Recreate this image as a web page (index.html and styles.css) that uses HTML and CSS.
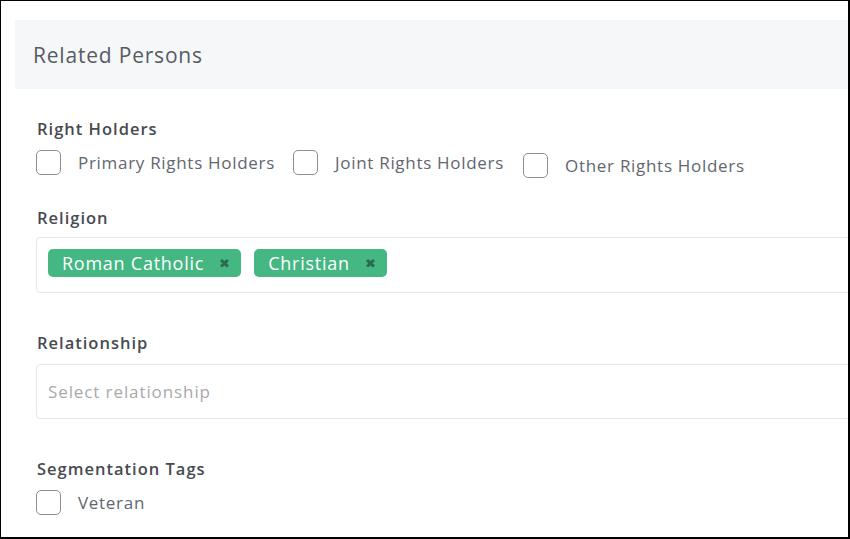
FILE: index.html
```html
<!DOCTYPE html>
<html lang="en">
<head>
<meta charset="utf-8">
<title>Related Persons</title>
<link rel="stylesheet" href="styles.css">
</head>
<body>
<div class="frame">
  <section class="card">
    <header class="card-header">Related Persons</header>
    <div class="card-body">
      <div class="field field-first">
        <div class="field-label">Right Holders</div>
        <div class="check-row">
          <label class="check"><span class="box"></span><span class="check-text">Primary Rights Holders</span></label>
          <label class="check"><span class="box"></span><span class="check-text">Joint Rights Holders</span></label>
          <label class="check check-low"><span class="box"></span><span class="check-text">Other Rights Holders</span></label>
        </div>
      </div>
      <div class="field field-religion">
        <div class="field-label">Religion</div>
        <div class="multi">
          <span class="tag">Roman Catholic<span class="tag-x">&#10006;</span></span>
          <span class="tag">Christian<span class="tag-x">&#10006;</span></span>
        </div>
      </div>
      <div class="field field-gap">
        <div class="field-label">Relationship</div>
        <div class="select">Select relationship</div>
      </div>
      <div class="field field-gap">
        <div class="field-label">Segmentation Tags</div>
        <div class="check-row">
          <label class="check"><span class="box"></span><span class="check-text">Veteran</span></label>
        </div>
      </div>
    </div>
  </section>
</div>
</body>
</html>
```

FILE: styles.css
```css
html, body {
  margin: 0;
  padding: 0;
  background: #fff;
}

.frame {
  width: 850px;
  height: 539px;
  box-sizing: border-box;
  border: 1px solid #000;
  border-right-width: 2px;
  border-bottom-width: 2px;
  overflow: hidden;
  padding: 19px 0 0 14px;
  font-family: "Open Sans", "Liberation Sans", sans-serif;
}

.card {
  width: 900px;
}

.card-header {
  height: 69px;
  background: #f6f7f9;
  padding-left: 18px;
  display: flex;
  align-items: center;
  font-size: 21px;
  letter-spacing: 0.8px;
  color: #575b63;
}

.card-body {
  padding-left: 21px;
}

.field-first {
  margin-top: 28px;
}

.field-religion {
  margin-top: 28px;
}

.field-gap {
  margin-top: 38px;
}

.field-label {
  font-size: 16.5px;
  line-height: 24px;
  font-weight: 600;
  letter-spacing: 1px;
  color: #474a50;
  padding-left: 1px;
}

.check-row {
  display: flex;
  align-items: flex-start;
  margin-top: 9px;
}

.check {
  display: flex;
  align-items: center;
  margin-right: 18px;
}

.check-low {
  margin-top: 3px;
  margin-left: 1px;
}

.box {
  width: 25px;
  height: 25px;
  box-sizing: border-box;
  border: 1px solid #8e8e8e;
  border-radius: 5px;
  background: #fff;
  margin-right: 17px;
}

.check-text {
  font-size: 17px;
  letter-spacing: 0.7px;
  color: #62666e;
}

.multi {
  margin-top: 7px;
  height: 56px;
  box-sizing: border-box;
  border: 1px solid #e6e6e6;
  border-radius: 4px;
  padding: 11px;
  display: flex;
  gap: 13px;
}

.tag {
  height: 28px;
  display: inline-flex;
  align-items: center;
  background: #44b783;
  color: #fff;
  border-radius: 5px;
  padding: 0 11px 0 14px;
  font-size: 18px;
  letter-spacing: 0.75px;
}

.tag-x {
  font-size: 13px;
  letter-spacing: 0;
  color: #2b6a4c;
  margin-left: 15px;
}

.select {
  margin-top: 9px;
  height: 55px;
  box-sizing: border-box;
  border: 1px solid #e6e6e6;
  border-radius: 4px;
  padding-left: 11px;
  display: flex;
  align-items: center;
  font-size: 17px;
  letter-spacing: 0.9px;
  color: #a9a9a9;
}
```
